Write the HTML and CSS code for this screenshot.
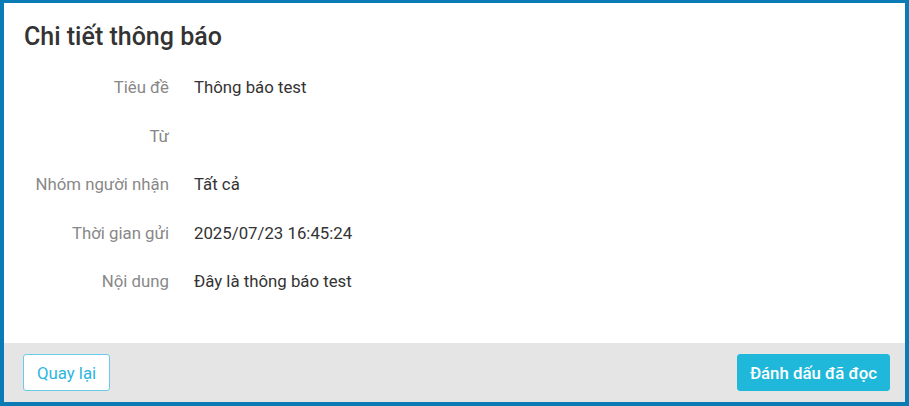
FILE: index.html
```html
<!DOCTYPE html>
<html lang="vi">
<head>
<meta charset="utf-8">
<link rel="stylesheet" href="styles.css">
</head>
<body>
<div class="frame">
  <div class="content">
    <h1 class="title">Chi tiết thông báo</h1>
    <div class="details">
      <div class="label">Tiêu đề</div><div class="value">Thông báo test</div>
      <div class="label">Từ</div><div class="value"></div>
      <div class="label">Nhóm người nhận</div><div class="value">Tất cả</div>
      <div class="label">Thời gian gửi</div><div class="value">2025/07/23 16:45:24</div>
      <div class="label">Nội dung</div><div class="value">Đây là thông báo test</div>
    </div>
  </div>
  <div class="footer">
    <button class="btn btn-outline">Quay lại</button>
    <button class="btn btn-primary">Đánh dấu đã đọc</button>
  </div>
</div>
</body>
</html>
```
FILE: styles.css
```css
* { box-sizing: border-box; }
html, body { margin: 0; padding: 0; }
body {
  width: 909px;
  height: 406px;
  font-family: Roboto, "Noto Sans", sans-serif;
  background: #0a7bb4;
}
.frame {
  width: 909px;
  height: 406px;
  border: solid #0a7bb4;
  border-width: 3px 4px 4px 4px;
  display: flex;
  flex-direction: column;
  background: #fff;
}
.content {
  flex: 1;
  padding: 19px 20px 0 20px;
}
.title {
  margin: 0;
  font-size: 25px;
  font-weight: 500;
  color: #333;
  line-height: 30px;
}
.details {
  margin-top: 11px;
  display: grid;
  grid-template-columns: 145px 1fr;
  column-gap: 25px;
  row-gap: 0;
  font-size: 16.8px;
  line-height: 48.5px;
}
.label {
  text-align: right;
  color: #888;
  white-space: nowrap;
}
.value {
  color: #333;
  min-height: 48.5px;
}
.footer {
  height: 59px;
  background: #e5e5e5;
  display: flex;
  justify-content: space-between;
  align-items: center;
  padding: 0 15px 0 19px;
}
.btn {
  height: 37px;
  border-radius: 3px;
  font-family: Roboto, "Noto Sans", sans-serif;
  font-size: 16.8px;
  padding: 0;
  cursor: pointer;
}
.btn-outline {
  background: #fff;
  color: #2bb6df;
  border: 1px solid #6dcbe8;
  width: 87px;
}
.btn-primary {
  background: #1fb8da;
  color: #fff;
  border: 1px solid #1fb8da;
  width: 153px;
  font-weight: 500;
}
```
